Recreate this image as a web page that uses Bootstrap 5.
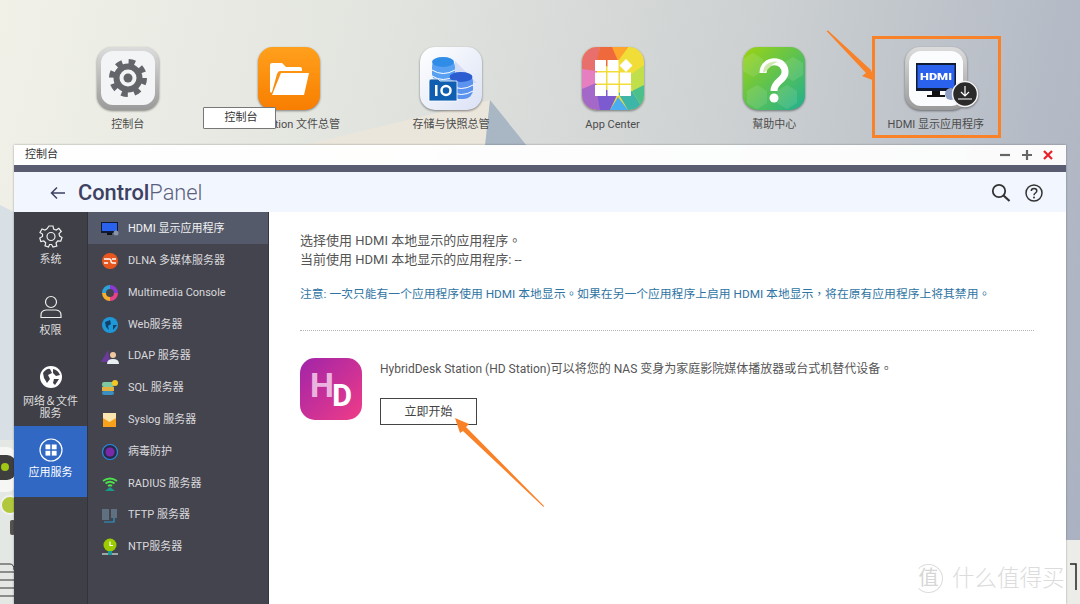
<!DOCTYPE html>
<html lang="zh-CN">
<head>
<meta charset="UTF-8">
<title>ControlPanel</title>
<link href="https://cdn.jsdelivr.net/npm/bootstrap@5.3.0/dist/css/bootstrap.min.css" rel="stylesheet">
<style>
html, body { height: 100%; }
body { margin: 0; overflow: hidden; font-family: Roboto, "Noto Sans CJK SC", sans-serif; background: #fff; }
.desk { position: relative; width: 1080px; height: 604px; overflow: hidden; background: linear-gradient(103deg, #f1f1e8 0%, #e2e4df 32%, #cdd1d2 62%, #a9b0c0 100%); }
.desk-art { position: absolute; left: 0; top: 0; }
.app-row { position: absolute; left: 47px; top: 47px; width: 970px; }
.app-item { width: 161.6px; text-align: center; font-size: 11px; line-height: 14px; color: #4c4c4c; white-space: nowrap; }
.app-icon { display: block; width: 62px; height: 64px; margin: 0 auto 7px; overflow: visible; filter: drop-shadow(0 1px 1px rgba(0,0,0,.45)); }
.files-label { margin-left: 36px; }
.tip-box { position: absolute; left: 203px; top: 107px; width: 73px; height: 22px; background: #fff; border: 1px solid #777; border-radius: 1px; font-size: 11px; line-height: 20px; text-align: center; color: #333; padding-left: 3px; }
.pick-box { position: absolute; left: 872px; top: 36px; width: 129px; height: 102px; border: 3px solid #f98128; }
.over-art { position: absolute; left: 0; top: 0; pointer-events: none; }
.win { position: absolute; left: 14px; top: 145px; width: 1052px; height: 459px; box-shadow: 0 0 2px rgba(0,0,0,.35); }
.win-title { height: 20px; padding: 0 12px 0 11px; background: rgba(255,255,255,.94); font-size: 11px; color: #333; }
.win-strip { height: 7px; background: #5a5d72; }
.win-head { height: 40px; background: #f2f6fe; padding: 2px 23px 0 36px; }
.head-name { font-size: 21.8px; line-height: 24px; margin-left: 12px; color: #3d4162; font-weight: 500; }
.head-name span { font-weight: 300; color: #5b5f7c; }
.help-gap { margin-left: 14px; }
.win-body { height: 392px; }
.side-one { width: 74px; background: #3f3f47; border-right: 1px solid #33333a; color: #ddd; font-size: 11px; line-height: 11.5px; text-align: center; }
.side-cell { padding-top: 12px; height: 71px; }
.side-cell svg { display: block; margin: 0 auto 6px; }
.side-cell.tall { height: 72px; padding-top: 11px; }
.side-cell.tall svg { margin-bottom: 7px; }
.side-cell.now { width: 73px; background: #3068c4; color: #fff; }
.side-cell.now svg { margin-bottom: 5px; }
.side-two { width: 181px; background: #44444e; border-right: 1px solid #37373f; color: #d9d9dc; font-size: 11px; }
.side-line { height: 31.8px; padding: 3px 0 0 13px; white-space: nowrap; }
.side-line svg { flex: none; margin-right: 9px; }
.side-line.now { background: #555a6b; color: #f2f2f2; }
.main-pane { flex: 1; background: #fff; padding: 19px 32px 0 31px; color: #555; font-size: 13px; font-family: Roboto, "Noto Sans CJK TC", sans-serif; }
.main-pane p { margin: 0; line-height: 19px; }
.note-line { color: #2f74a3; font-size: 11.8px; margin-top: 16px !important; white-space: nowrap; }
.dot-rule { border-top: 1px dotted #b5b5b5; margin-top: 26px; margin-bottom: 27px; }
.hd-logo { flex: none; margin-right: 18px; }
.desc-line { font-size: 12px; line-height: 14px !important; padding-top: 4px; margin-bottom: 22px !important; white-space: nowrap; }
.start-btn { display: block; width: 97px; height: 27px; padding: 0; border: 1px solid #444; border-radius: 0; background: #fff; color: #444; font-size: 12px; line-height: 24px; }
.wm-text { position: absolute; left: 952px; top: 564px; width: 114px; overflow: hidden; white-space: nowrap; font-size: 22.5px; line-height: 28px; color: #dcdcdc; font-weight: 300; }
.wm-seal { position: absolute; left: 914px; top: 564px; width: 29px; height: 29px; border: 1px solid #dcdcdc; border-left-color: transparent; border-radius: 50%; font-size: 20px; line-height: 26px; text-align: center; color: #d6d6d6; }
</style>
</head>
<body>
<div class="desk">
  <svg class="desk-art" width="1080" height="604">
    <polygon points="300,146 490,100 485,146" fill="#ebe6dc"/>
    <polygon points="490,100 527,146 485,146" fill="#a9b6c4"/>
    <polygon points="0,205 14,212 14,560 0,560" fill="#d8e0e6"/>
    <rect x="0" y="440" width="14" height="164" fill="#e4e8e5"/>
    <rect x="-8" y="447" width="24" height="45" rx="9" fill="#f6f6f4"/>
    <rect x="-8" y="455" width="24" height="25" rx="9" fill="#3e3e3e"/>
    <circle cx="5" cy="467" r="4" fill="#a0c814"/>
    <circle cx="10" cy="505" r="9" fill="#b2c83c" stroke="#f1f1ef" stroke-width="2"/>
    <rect x="10" y="520" width="5" height="15" rx="2" fill="#55534f"/>
    <path d="M0 564H10Q14 564 14 570M0 572H14M0 580H14M0 588H14M0 596H14" stroke="#333" fill="none"/>
    <rect x="1066" y="540" width="14" height="64" fill="#ecece8"/>
    <path d="M1070 564H1076V590" stroke="#222" stroke-width="1.5" fill="none"/>
  </svg>

  <div class="app-row d-flex">
    <div class="app-item">
      <svg class="app-icon" viewBox="0 0 62 64">
        <defs><linearGradient id="rimFill" x1="0" y1="0" x2="0" y2="1"><stop offset="0" stop-color="#dcdcdc"/><stop offset="1" stop-color="#9a9a9a"/></linearGradient></defs>
        <rect x="0" y="0" width="62" height="63" rx="15" fill="url(#rimFill)"/>
        <rect x="4" y="4" width="54" height="54" rx="12" fill="#f2f4f6"/>
        <circle cx="31" cy="31" r="15" fill="none" stroke="#63656b" stroke-width="8" stroke-dasharray="5.9 5.9"/>
        <circle cx="31" cy="31" r="11.500" fill="none" stroke="#63656b" stroke-width="6"/>
        <circle cx="31" cy="31" r="4.500" fill="#63656b"/>
      </svg>
      控制台
    </div>
    <div class="app-item">
      <svg class="app-icon" viewBox="0 0 62 64">
        <defs><linearGradient id="orangeFill" x1="0" y1="0" x2="0" y2="1"><stop offset="0" stop-color="#ffa01c"/><stop offset="1" stop-color="#f87e00"/></linearGradient></defs>
        <rect x="0" y="0" width="62" height="63" rx="15" fill="url(#orangeFill)"/>
        <path d="M12 45V18Q12 16 14 16H24L28 20H42Q44 20 44 22V24H22Q20 24 19 27L14 45Q14 46 12 45Z" fill="#fff"/>
        <path d="M23 26H51L46 48H14Z" fill="#fff"/>
      </svg>
      <span class="files-label">tion 文件总管</span>
    </div>
    <div class="app-item">
      <svg class="app-icon" viewBox="0 0 62 64">
        <defs><linearGradient id="storeFill" x1="0" y1="0" x2="1" y2="1"><stop offset="0" stop-color="#fff"/><stop offset="1" stop-color="#dbe2f5"/></linearGradient></defs>
        <rect x="0" y="0" width="62" height="63" rx="15" fill="url(#storeFill)"/>
        <polygon points="35,14 57,36 35,36" fill="#d3dcf4"/>
        <rect x="12" y="11" width="23" height="25" rx="9" fill="#58a0f2"/>
        <ellipse cx="23" cy="15" rx="11" ry="5" fill="#2f8de8"/>
        <path d="M12 23Q23 30 35 23M12 29Q23 36 35 29" stroke="#fff" fill="none"/>
        <rect x="30" y="26" width="23" height="26" rx="9" fill="#5b93ef"/>
        <ellipse cx="41" cy="30" rx="11.500" ry="5" fill="#2b5cd0"/>
        <path d="M30 38Q41 45 53 38M30 44Q41 51 53 44" stroke="#fff" fill="none"/>
        <path d="M9 34Q9 32 11 32H18L20 34H37V54H9Z" fill="#0f5eb0" stroke="#fff" stroke-width=".8"/>
        <rect x="15" y="38" width="2.500" height="11" fill="#fff"/>
        <circle cx="26" cy="43.500" r="4.500" fill="none" stroke="#fff" stroke-width="2.500"/>
      </svg>
      存储与快照总管
    </div>
    <div class="app-item">
      <svg class="app-icon" viewBox="0 0 62 64">
        <defs><clipPath id="appClip"><rect width="62" height="63" rx="15"/></clipPath></defs>
        <g clip-path="url(#appClip)">
          <rect width="62" height="63" fill="#f1dd38"/>
          <polygon points="0,0 18,0 14,30 0,22" fill="#e86f6c"/>
          <polygon points="18,0 46,0 31,20 14,18" fill="#ee6a3c"/>
          <polygon points="30,0 46,0 36,14" fill="#ffa42c"/>
          <polygon points="0,22 14,24 14,42 0,42" fill="#e67fc0"/>
          <polygon points="0,42 14,36 22,63 0,63" fill="#a468c8"/>
          <polygon points="14,40 36,46 28,63 18,63" fill="#7c5ad0"/>
          <polygon points="28,63 36,50 46,63" fill="#4aaef0"/>
          <polygon points="36,46 50,44 62,63 46,63" fill="#3db5a8"/>
          <polygon points="50,44 62,34 62,63" fill="#4cc08c"/>
          <polygon points="48,28 62,18 62,38 50,44" fill="#c0df4a"/>
          <g fill="#fff">
            <rect x="13" y="13" width="11" height="11"/><rect x="25.500" y="13" width="11" height="11"/>
            <rect x="13" y="25.500" width="11" height="11"/><rect x="25.500" y="25.500" width="11" height="11"/><rect x="38" y="25.500" width="11" height="11"/>
            <rect x="13" y="38" width="11" height="11"/><rect x="25.500" y="38" width="11" height="11"/><rect x="38" y="38" width="11" height="11"/>
            <polygon points="44,12 50.500,18.500 44,25 37.500,18.500"/>
          </g>
        </g>
      </svg>
      App Center
    </div>
    <div class="app-item">
      <svg class="app-icon" viewBox="0 0 62 64">
        <defs><linearGradient id="helpFill" x1="0" y1="0" x2="1" y2="1"><stop offset="0" stop-color="#9cd412"/><stop offset="1" stop-color="#1fb08f"/></linearGradient></defs>
        <rect width="62" height="63" rx="15" fill="url(#helpFill)"/>
        <g fill="#fff" opacity=".1">
          <polygon points="10,6 20,12 20,24 10,30 0,24 0,12"/>
          <polygon points="50,10 60,16 60,28 50,34 40,28 40,16"/>
          <polygon points="14,38 24,44 24,56 14,62 4,56 4,44"/>
          <polygon points="44,38 54,44 54,56 44,62 34,56 34,44"/>
        </g>
        <path d="M20 26C20 11 43 11 42 26C41 34 31 34 31 44" fill="none" stroke="#fff" stroke-width="7"/>
        <path d="M20 26C20 16 30 13 36 15C28 16 27 22 20 26Z" fill="#cfe8b0"/>
        <circle cx="31" cy="51" r="4.500" fill="#fff"/>
      </svg>
      幫助中心
    </div>
    <div class="app-item">
      <svg class="app-icon" viewBox="0 0 62 64">
        <rect width="62" height="63" rx="15" fill="url(#rimFill)"/>
        <rect x="4" y="4" width="54" height="55" rx="12" fill="#fbfcfd"/>
        <rect x="11" y="16" width="40" height="28" fill="#111a33"/>
        <rect x="12.500" y="18" width="37" height="23" fill="#2a62ee"/>
        <text x="31" y="33" text-anchor="middle" font-size="9" font-weight="900" fill="#fff" font-family="Roboto, sans-serif" textLength="32" lengthAdjust="spacingAndGlyphs">HDMI</text>
        <rect x="27" y="44" width="8" height="4" fill="#111"/><rect x="22" y="48" width="18" height="2" fill="#111"/>
        <circle cx="46" cy="47" r="6" fill="#8ea0c8"/>
        <circle cx="60" cy="47" r="12.500" fill="#2a2a2a" stroke="#f2f2f2" stroke-width="1.500"/>
        <path d="M60 39V48M56 45L60 49L64 45M53 52H67" stroke="#fff" fill="none" stroke-width="1.200"/>
      </svg>
      HDMI 显示应用程序
    </div>
  </div>

  <div class="tip-box">控制台</div>
  <div class="pick-box"></div>

  <div class="win">
    <div class="win-title d-flex align-items-center justify-content-between">
      <span>控制台</span>
      <svg width="56" height="12" viewBox="0 0 56 12">
        <path d="M2 6H12" stroke="#666" stroke-width="2.200"/>
        <path d="M24 6H34M29 1V11" stroke="#666" stroke-width="2.200"/>
        <path d="M46 2L54 10M54 2L46 10" stroke="#e8222a" stroke-width="2.200"/>
      </svg>
    </div>
    <div class="win-strip"></div>
    <div class="win-head d-flex align-items-center">
      <svg width="16" height="14" viewBox="0 0 16 14"><path d="M15 7H2M7 1.500L1.500 7L7 12.500" fill="none" stroke="#3d4162" stroke-width="1.500"/></svg>
      <div class="head-name">Control<span>Panel</span></div>
      <svg class="ms-auto" width="20" height="20" viewBox="0 0 20 20"><circle cx="8" cy="8" r="6.200" fill="none" stroke="#333" stroke-width="1.800"/><path d="M12.500 12.500L18.500 18" stroke="#333" stroke-width="2.200"/></svg>
      <svg class="help-gap" width="18" height="18" viewBox="0 0 18 18"><circle cx="9" cy="9" r="8" fill="none" stroke="#333" stroke-width="1.500"/><path d="M6.300 7C6.300 3.800 11.800 3.800 11.800 7C11.800 9 9 9 9 11.200" fill="none" stroke="#333" stroke-width="1.500"/><circle cx="9" cy="13.500" r="1" fill="#333"/></svg>
    </div>
    <div class="win-body d-flex">
      <div class="side-one">
        <div class="side-cell">
          <svg width="24" height="24" viewBox="0 0 24 24" fill="none" stroke="#eee" stroke-width="1.200"><path d="M10 2H14L14.600 5L17.200 6.100L19.800 4.400L22.300 7.500L20 9.600L20.600 12L23 13.500L21.800 17L18.800 16.800L17 19L17.800 22L14 23L12.600 20.500H10.600L9.500 23L6 21.800L6.700 18.800L4.800 17L1.800 17.600L.8 14L3.500 12.500L3.500 10L1 8.500L3 5L6 6L8 4.800Z"/><circle cx="12" cy="12.500" r="4"/></svg>
          系统
        </div>
        <div class="side-cell">
          <svg width="22" height="24" viewBox="0 0 22 24" fill="none" stroke="#eee" stroke-width="1.200"><circle cx="11" cy="7" r="5.500"/><path d="M1 22.500V20Q1 15.500 6 15H16Q21 15.500 21 20V22.500Z"/></svg>
          权限
        </div>
        <div class="side-cell tall">
          <svg width="24" height="24" viewBox="0 0 24 24"><circle cx="12" cy="12" r="11" fill="#fff"/><path d="M4 8Q8 3 11 4L13 8L9 10L11 14L8 18L5 13ZM14 4Q19 5 21 10L17 11L14 8ZM15 14L20 14L16 20L14 18Z" fill="#3f3f47"/></svg>
          网络＆文件<br>服务
        </div>
        <div class="side-cell now">
          <svg width="24" height="24" viewBox="0 0 24 24" fill="#fff"><circle cx="12" cy="12" r="11" fill="none" stroke="#fff" stroke-width="1.200"/><rect x="6.500" y="6.500" width="4.800" height="4.800"/><rect x="12.800" y="6.500" width="4.800" height="4.800"/><rect x="6.500" y="12.800" width="4.800" height="4.800"/><rect x="12.800" y="12.800" width="4.800" height="4.800"/></svg>
          应用服务
        </div>
      </div>
      <div class="side-two">
        <div class="side-line now d-flex align-items-center">
          <svg width="18" height="16" viewBox="0 0 18 16"><rect y="1" width="17" height="11" fill="#111a33"/><rect x="1" y="2" width="15" height="8" fill="#2a62ee"/><rect x="6" y="12" width="5" height="2" fill="#111"/><circle cx="15" cy="12" r="2.500" fill="#8a94a8"/></svg>
          HDMI 显示应用程序
        </div>
        <div class="side-line d-flex align-items-center">
          <svg width="18" height="16" viewBox="0 0 18 16"><circle cx="9" cy="8" r="8" fill="#e8561f"/><path d="M3 6H8Q10 6 10 8T12 10H15M3 10H7M11 6H15" stroke="#fff" stroke-width="1.300" fill="none"/></svg>
          DLNA 多媒体服务器
        </div>
        <div class="side-line d-flex align-items-center">
          <svg width="18" height="18" viewBox="0 0 18 18" fill="none" stroke-width="4"><path d="M3 9A6 6 0 0 1 9 3" stroke="#2fa0d8"/><path d="M9 3A6 6 0 0 1 15 9" stroke="#8a3ad0"/><path d="M15 9A6 6 0 0 1 9 15" stroke="#e8438a"/><path d="M9 15A6 6 0 0 1 3 9" stroke="#f4b02c"/></svg>
          Multimedia Console
        </div>
        <div class="side-line d-flex align-items-center">
          <svg width="18" height="16" viewBox="0 0 18 16"><circle cx="9" cy="8" r="8" fill="#1f98d8"/><path d="M4 5L9 3L10 7L7 9L8 13L5 10ZM12 8L16 8L12 13Z" fill="#11406a"/></svg>
          Web服务器
        </div>
        <div class="side-line d-flex align-items-center">
          <svg width="18" height="16" viewBox="0 0 18 16"><polygon points="0,13 7,1 9,13" fill="#6a3a9c"/><circle cx="12" cy="6" r="3" fill="#f0c8a0"/><path d="M6 15Q6 10 12 10T18 15Z" fill="#e8eef2"/></svg>
          LDAP 服务器
        </div>
        <div class="side-line d-flex align-items-center">
          <svg width="18" height="18" viewBox="0 0 18 18"><rect x="1" y="3" width="12" height="5" rx="2" fill="#7fc8a0"/><rect x="1" y="8" width="12" height="4" fill="#e0b040"/><rect x="1" y="12" width="12" height="4" rx="2" fill="#3a8ec0"/><circle cx="14" cy="4" r="3" fill="#f4c820"/></svg>
          SQL 服务器
        </div>
        <div class="side-line d-flex align-items-center">
          <svg width="18" height="16" viewBox="0 0 18 16"><rect x="2" y="1" width="13" height="9" fill="#fbe6b0"/><polygon points="2,6 8.500,10 15,6 15,15 2,15" fill="#f8a21c"/></svg>
          Syslog 服务器
        </div>
        <div class="side-line d-flex align-items-center">
          <svg width="18" height="18" viewBox="0 0 18 18"><circle cx="9" cy="9" r="7.500" fill="#2a2a4a" stroke="#2a8de0" stroke-width="1.200"/><circle cx="9" cy="9" r="4.500" fill="#7a2aa8"/></svg>
          病毒防护
        </div>
        <div class="side-line d-flex align-items-center">
          <svg width="18" height="16" viewBox="0 0 18 16" fill="none" stroke="#4ce04c" stroke-width="1.800"><path d="M2 5Q9 0 16 5M4.500 7.500Q9 4 13.500 7.500M7 10Q9 8.500 11 10"/><path d="M4 15H14L9 11Z" fill="#1a9a8a" stroke="none"/></svg>
          RADIUS 服务器
        </div>
        <div class="side-line d-flex align-items-center">
          <svg width="18" height="16" viewBox="0 0 18 16"><rect x="1" y="1" width="7" height="11" fill="#5f7080"/><rect x="10" y="1" width="6" height="9" fill="#5f7080"/><path d="M3 14H13V10" stroke="#2a9ad0" stroke-width="1.200" fill="none"/></svg>
          TFTP 服务器
        </div>
        <div class="side-line d-flex align-items-center">
          <svg width="18" height="18" viewBox="0 0 18 18"><circle cx="9" cy="7" r="6.500" fill="#9ccc00"/><path d="M9 3.500V7.500H12" stroke="#fff" stroke-width="1.200" fill="none"/><rect x="1" y="15" width="16" height="2" fill="#9aa8a8"/><rect x="7" y="13" width="4" height="4" fill="#1a9a9a"/></svg>
          NTP服务器
        </div>
      </div>
      <div class="main-pane" lang="zh-TW">
        <p>选择使用 HDMI 本地显示的应用程序。</p>
        <p>当前使用 HDMI 本地显示的应用程序: --</p>
        <p class="note-line">注意: 一次只能有一个应用程序使用 HDMI 本地显示。如果在另一个应用程序上启用 HDMI 本地显示，将在原有应用程序上将其禁用。</p>
        <div class="dot-rule"></div>
        <div class="d-flex">
          <svg class="hd-logo" width="62" height="62" viewBox="0 0 62 62">
            <defs><linearGradient id="hdFill" x1="0" y1="0" x2="1" y2="1"><stop offset="0" stop-color="#a024a8"/><stop offset="1" stop-color="#f03c88"/></linearGradient></defs>
            <rect width="62" height="62" rx="15" fill="url(#hdFill)"/>
            <text x="10" y="39" font-size="34" font-weight="700" fill="#eab4de" font-family="Roboto, sans-serif">H<tspan dx="-2" dy="9" fill="#fff" font-size="31">D</tspan></text>
          </svg>
          <div>
            <p class="desc-line">HybridDesk Station (HD Station)可以将您的 NAS 变身为家庭影院媒体播放器或台式机替代设备。</p>
            <button type="button" class="btn start-btn">立即开始</button>
          </div>
        </div>
      </div>
    </div>
  </div>

  <svg class="over-art" width="1080" height="604" fill="#f98128">
    <polygon points="826.500,31 828,30.500 871,70 875,81 862,76 866,73"/>
    <polygon points="455,418 469,424 466,427 544,506 543.500,507 463,431 460,433"/>
  </svg>
  <div class="wm-seal">值</div>
  <div class="wm-text">什么值得买</div>
</div>
<script src="https://cdn.jsdelivr.net/npm/bootstrap@5.3.0/dist/js/bootstrap.bundle.min.js"></script>
</body>
</html>
